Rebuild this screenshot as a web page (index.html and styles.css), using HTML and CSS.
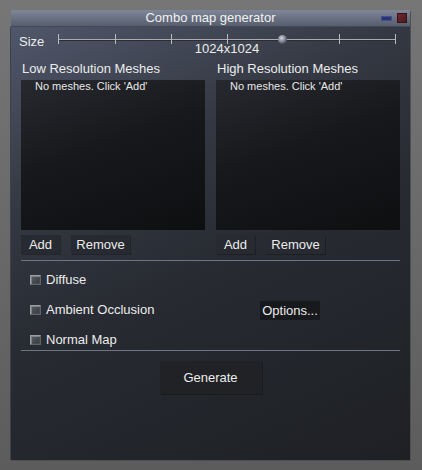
FILE: index.html
```html
<!DOCTYPE html>
<html>
<head>
<meta charset="utf-8">
<link rel="stylesheet" href="styles.css">
</head>
<body>
<div class="window">
  <div class="titlebar">
    <span></span>
    <span class="title">Combo map generator</span>
    <span class="controls"><span class="min"></span><span class="close"></span></span>
  </div>
  <div class="body">
    <div class="size-row">
      <span class="size-label">Size</span>
      <div class="slider">
        <svg class="track" width="338" height="12" viewBox="0 0 338 12">
          <defs>
            <radialGradient id="knob" cx="0.4" cy="0.35" r="0.7">
              <stop offset="0" stop-color="#d4d8e2"/>
              <stop offset="0.5" stop-color="#8a90a0"/>
              <stop offset="1" stop-color="#3c414e"/>
            </radialGradient>
          </defs>
          <line x1="0" y1="6.5" x2="338" y2="6.5" stroke="#2a2d34" stroke-width="1"/>
          <line x1="0" y1="5.5" x2="338" y2="5.5" stroke="#a9abaf" stroke-width="1"/>
          <g stroke="#b8babd" stroke-width="1">
            <line x1="0.5" y1="0" x2="0.5" y2="10"/>
            <line x1="57.5" y1="0" x2="57.5" y2="10"/>
            <line x1="113.5" y1="0" x2="113.5" y2="10"/>
            <line x1="169.5" y1="0" x2="169.5" y2="10"/>
            <line x1="281.5" y1="0" x2="281.5" y2="10"/>
            <line x1="337.5" y1="0" x2="337.5" y2="10"/>
          </g>
          <circle cx="224.5" cy="5.5" r="4.5" fill="url(#knob)"/>
        </svg>
        <div class="slider-value">1024x1024</div>
      </div>
    </div>
    <div class="panels">
      <div class="panel">
        <div class="panel-label">Low Resolution Meshes</div>
        <div class="list"><div class="list-empty">No meshes. Click 'Add'</div></div>
        <div class="btn-row"><button class="btn btn-add">Add</button><button class="btn btn-remove">Remove</button></div>
      </div>
      <div class="panel">
        <div class="panel-label">High Resolution Meshes</div>
        <div class="list"><div class="list-empty">No meshes. Click 'Add'</div></div>
        <div class="btn-row"><button class="btn btn-add">Add</button><button class="btn btn-remove">Remove</button></div>
      </div>
    </div>
    <div class="sep"></div>
    <div class="options">
      <div class="opt-row"><label class="check"><span class="box"></span>Diffuse</label></div>
      <div class="opt-row"><label class="check"><span class="box"></span>Ambient Occlusion</label><button class="btn btn-options">Options...</button></div>
      <div class="opt-row"><label class="check"><span class="box"></span>Normal Map</label></div>
    </div>
    <div class="sep"></div>
    <div class="gen-row"><button class="btn btn-gen">Generate</button></div>
  </div>
</div>
</body>
</html>
```
FILE: styles.css
```css
html, body {
  margin: 0;
  padding: 0;
}
body {
  width: 422px;
  height: 470px;
  overflow: hidden;
  background: linear-gradient(#767676, #5c5c5c);
  font-family: "Liberation Sans", Arial, sans-serif;
  font-size: 13px;
  color: #ececec;
}
.window {
  margin: 10px 0 0 11px;
  width: 399px;
  height: 450px;
  display: flex;
  flex-direction: column;
  box-shadow: 1px 1px 0 #4e4f52;
}
.titlebar {
  height: 16px;
  line-height: 16px;
  display: grid;
  grid-template-columns: 1fr auto 1fr;
  align-items: center;
  background: linear-gradient(#7f8799, #626979 70%, #575e6d);
  border-bottom: 1px solid #434957;
}
.title {
  color: #f2f2f2;
  font-size: 13px;
}
.controls {
  justify-self: end;
  display: flex;
  align-items: center;
  gap: 5px;
  padding-right: 3px;
}
.min {
  width: 9px;
  height: 3px;
  background: #2a3372;
  border: 1px solid #465090;
}
.close {
  width: 10px;
  height: 10px;
  box-sizing: border-box;
  background: linear-gradient(135deg, #6c2a2e, #4c1a1d);
  border: 1px solid #3a1215;
}
.body {
  flex: 1;
  padding: 0 10px;
  background: linear-gradient(155deg, #50576a 0%, #343842 30%, #272a31 55%, #1e2024 100%);
  border-left: 1px solid #3d4149;
  margin-left: -1px;
}
.size-row {
  display: flex;
  align-items: flex-start;
  padding-top: 7px;
  margin-left: -2px;
}
.size-label {
  width: 39px;
  line-height: 16px;
}
.slider {
  width: 338px;
  display: flex;
  flex-direction: column;
  align-items: center;
}
.track {
  display: block;
}
.slider-value {
  margin-top: -5px;
  line-height: 15px;
  font-size: 13px;
}
.panels {
  display: grid;
  grid-template-columns: 184px 184px;
  column-gap: 11px;
  padding-top: 5px;
}
.panel-label {
  line-height: 16px;
  padding-left: 1px;
}
.list {
  margin-top: 3px;
  height: 150px;
  background: linear-gradient(160deg, #27292f 0%, #17181b 45%, #0e0f11 100%);
}
.list-empty {
  font-size: 11px;
  line-height: 13px;
  padding-left: 14px;
  color: #e8e8e8;
}
.btn-row {
  margin-top: 5px;
  display: flex;
  gap: 11px;
}
.btn {
  font-family: "Liberation Sans", Arial, sans-serif;
  font-size: 13px;
  color: #ececec;
  border: none;
  padding: 0;
  margin: 0;
  height: 19px;
  line-height: 19px;
  background: #272a30;
  box-shadow: 1px 1px 0 rgba(0, 0, 0, 0.25);
}
.btn-add {
  width: 39px;
}
.btn-remove {
  width: 59px;
}
.sep {
  height: 1px;
  background: #6e7484;
}
.panels + .sep {
  margin-top: 6px;
}
.options {
  padding-top: 9px;
  display: flex;
  flex-direction: column;
  gap: 10px;
}
.opt-row {
  height: 20px;
  display: flex;
  align-items: center;
}
.check {
  width: 239px;
  box-sizing: border-box;
  padding-left: 9px;
  display: flex;
  align-items: center;
  gap: 5px;
  line-height: 16px;
}
.box {
  width: 11px;
  height: 10px;
  box-sizing: border-box;
  border: 1px solid #9a9da3;
  border-right-color: #60636a;
  border-bottom-color: #60636a;
  background: linear-gradient(135deg, #5a5e66, #33363c);
  box-shadow: inset 1px 1px 0 #7c8087, inset -1px -1px 0 #4a4d53;
}
.btn-options {
  width: 60px;
  height: 19px;
  background: #17191c;
  box-shadow: none;
}
.gen-row {
  padding-top: 10px;
  display: flex;
  justify-content: center;
}
.btn-gen {
  width: 102px;
  height: 33px;
  line-height: 33px;
  background: #202226;
  box-shadow: 1px 1px 0 #1a1b1e;
}
```
